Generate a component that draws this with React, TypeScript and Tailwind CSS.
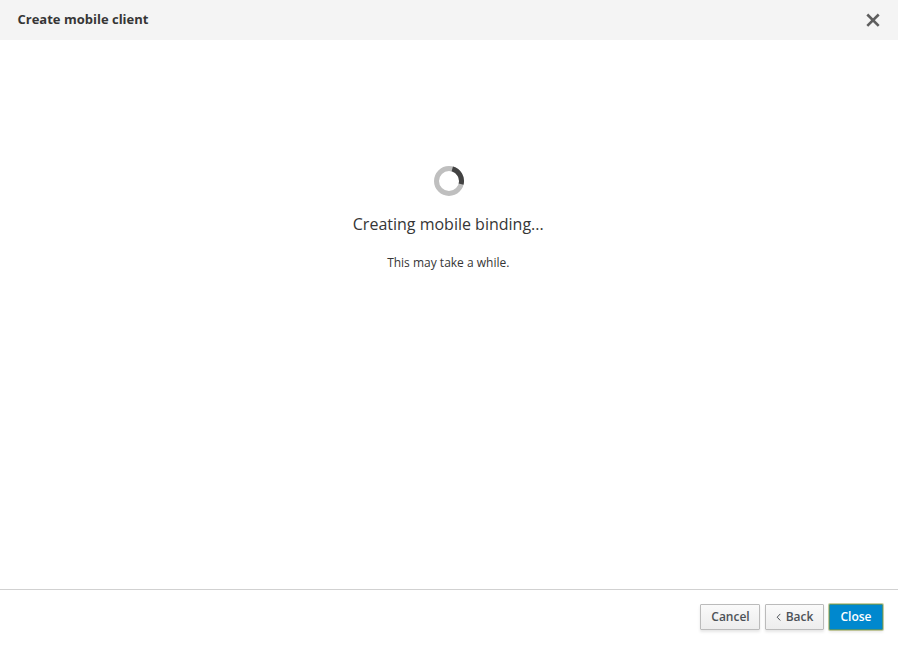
function Spinner() {
  return (
    <svg width="32" height="32" viewBox="0 0 32 32" fill="none" strokeWidth="5" aria-label="Loading">
      <circle cx="16" cy="16" r="12.5" stroke="#bfbfbf" />
      <path d="M19.3 3.95A12.5 12.5 0 0 1 28.1 19.2" stroke="#424242" />
    </svg>
  );
}

const plainButton =
  "flex h-[26px] items-center justify-center rounded-[1px] border border-[#bbb] bg-linear-to-b from-[#fafafa] to-[#ededed] text-[12px] font-semibold leading-[20px] text-[#4d5258] shadow-[0_2px_3px_rgba(3,3,3,0.1)]";

export default function App() {
  return (
    <div className="flex h-[647px] w-full flex-col bg-white font-['Open_Sans',sans-serif] text-[12px] leading-[20px] text-[#363636]">
      <header className="flex h-10 shrink-0 items-center justify-between bg-[#f4f4f4] pr-[18px] pl-[17.5px]">
        <h4 className="pb-[2px] text-[13px] font-bold leading-[20px]">Create mobile client</h4>
        <button type="button" aria-label="Close dialog">
          <svg width="14" height="14" viewBox="0 0 14 14" stroke="#5e5e5e" strokeWidth="2.6">
            <path d="M1.3 1.5L12.7 12.9M12.7 1.5L1.3 12.9" />
          </svg>
        </button>
      </header>

      <main className="flex flex-1 flex-col items-center pt-[125px]">
        <Spinner />
        <h3 className="mt-[18px] pr-[1.5px] text-[16px] leading-[18px]">Creating mobile binding...</h3>
        <p className="mt-[20px] pr-[1.5px]">This may take a while.</p>
      </main>

      <footer className="flex h-[58px] shrink-0 items-start justify-end gap-[5px] border-t border-[#d1d1d1] pt-[14px] pr-[15px]">
        <button type="button" className={`${plainButton} w-[60px] pl-px`}>
          Cancel
        </button>
        <button type="button" className={`${plainButton} w-[59px] gap-[5px]`}>
          <svg width="5" height="8" viewBox="0 0 5 8" fill="none" stroke="#4d5258" strokeWidth="1">
            <path d="M4.3 0.9L1.2 4.2L4.3 7.5" />
          </svg>
          Back
        </button>
        <button
          type="button"
          className="flex h-[26px] w-[54px] items-center justify-center rounded-[1px] border border-[#4c9377] bg-[#0088ce] text-[12px] font-semibold leading-[20px] text-white shadow-[0_0_0_1px_rgba(150,160,70,0.5),0_2px_3px_rgba(3,3,3,0.1)]"
        >
          Close
        </button>
      </footer>
    </div>
  );
}
